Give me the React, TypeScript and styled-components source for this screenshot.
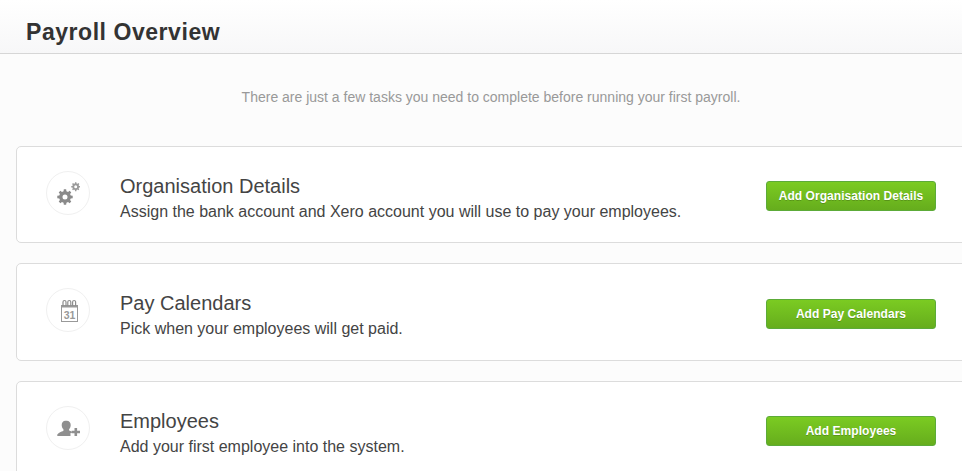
import styled, { createGlobalStyle } from "styled-components";

const GlobalStyle = createGlobalStyle`
  html, body {
    margin: 0;
    padding: 0;
    background: #fcfcfc;
    overflow: hidden;
  }
  body {
    font-family: "Liberation Sans", Arial, sans-serif;
  }
`;

const Page = styled.div`
  width: 962px;
  height: 471px;
  overflow: hidden;
`;

const Header = styled.header`
  height: 54px;
  box-sizing: border-box;
  padding: 18px 0 0 26px;
  border-bottom: 1px solid #d6d6d6;
  background: linear-gradient(#ffffff 0%, #f7f7f8 100%);
`;

const Title = styled.h1`
  margin: 0;
  font-size: 23px;
  line-height: 28px;
  font-weight: 700;
  letter-spacing: 0.55px;
  color: #333333;
`;

const Intro = styled.p`
  margin: 0;
  padding: 35px 0 0 20px;
  height: 56.6px;
  text-align: center;
  font-size: 14px;
  line-height: 16px;
  color: #999999;
`;

const TaskList = styled.div`
  display: flex;
  flex-direction: column;
  gap: 20px;
  padding-left: 16px;
`;

const Card = styled.section`
  width: 960px;
  height: 97.5px;
  box-sizing: border-box;
  display: flex;
  align-items: center;
  padding-left: 29px;
  background: #ffffff;
  border: 1px solid #dcdcdc;
  border-radius: 5px;
`;

const IconCircle = styled.div`
  flex: none;
  width: 44px;
  height: 44px;
  margin-bottom: 3px;
  box-sizing: border-box;
  display: flex;
  align-items: center;
  justify-content: center;
  border: 1px solid #f0f0f0;
  border-radius: 50%;
  background: #ffffff;
`;

const TaskText = styled.div`
  width: 676px;
  flex: none;
  padding: 9px 0 0 30px;
  box-sizing: border-box;
  color: #444444;
`;

const TaskTitle = styled.h2`
  margin: 0;
  font-size: 20px;
  line-height: 24px;
  font-weight: 400;
`;

const TaskDescription = styled.p`
  margin: 2px 0 0;
  font-size: 16px;
  line-height: 24px;
`;

const AddButton = styled.button`
  flex: none;
  width: 170px;
  height: 30px;
  margin-top: 4px;
  padding: 0;
  border: 1px solid #5cab38;
  border-radius: 3px;
  background: linear-gradient(#7bcb22 0%, #66ad1d 100%);
  color: #ffffff;
  font-family: inherit;
  font-size: 12px;
  font-weight: 700;
  letter-spacing: 0.05px;
  text-shadow: 0 1px 0 rgba(0, 0, 0, 0.2);
`;

const gearPath = (cx: number, cy: number, outer: number, inner: number, hole: number, teeth: number) => {
  const points: string[] = [];
  const step = (Math.PI * 2) / teeth;
  for (let i = 0; i < teeth; i++) {
    const a = i * step;
    const w = step * 0.24;
    const corners = [
      [inner, a - w * 1.3],
      [outer, a - w * 0.8],
      [outer, a + w * 0.8],
      [inner, a + w * 1.3],
    ];
    corners.forEach(([r, t]) => {
      points.push(`${(cx + r * Math.cos(t)).toFixed(2)} ${(cy + r * Math.sin(t)).toFixed(2)}`);
    });
  }
  return `M${points.join("L")}Z M${cx + hole} ${cy}A${hole} ${hole} 0 1 0 ${cx - hole} ${cy}A${hole} ${hole} 0 1 0 ${cx + hole} ${cy}Z`;
};

const GearsIcon = () => (
  <svg width="24" height="24" viewBox="0 0 24 24" aria-hidden="true">
    <path fill="#8a8a8a" fillRule="evenodd" d={gearPath(9, 16, 7.8, 5.9, 2.5, 8)} />
    <path fill="#9a9a9a" fillRule="evenodd" d={gearPath(19.7, 5.7, 4.5, 3.4, 1.5, 8)} />
  </svg>
);

const CalendarIcon = () => (
  <svg width="24" height="24" viewBox="0 0 24 24" aria-hidden="true">
    <rect x="5.500" y="8.500" width="16" height="15" fill="#fff" stroke="#999999" />
    <rect x="5" y="7" width="17" height="2.500" fill="#999999" />
    <path
      d="M7 8V4a1.500 1.500 0 0 1 3 0v4M11.800 8V4a1.500 1.500 0 0 1 3 0v4M16.600 8V4a1.500 1.500 0 0 1 3 0v4"
      fill="none"
      stroke="#8e8e8e"
      strokeWidth="1.200"
    />
    <text x="13.500" y="21" textAnchor="middle" fontSize="10.500" fontWeight="700" fontFamily="Liberation Sans" fill="#999999">
      31
    </text>
  </svg>
);

const AddUserIcon = () => (
  <svg width="24" height="24" viewBox="0 0 24 24" aria-hidden="true">
    <path
      fill="#8f8f8f"
      d="M10.700 4.700c2.500 0 4 1.800 4 4.200 0 1.800-.7 3.300-1.600 4.200v1.500c1 .3 1.900.7 2.700 1.100v1.300h-1.300v3H1.300v-1.600c1.500-1.600 3.800-2.700 6.100-3.400v-1.900c-1-.9-1.700-2.400-1.700-4.200 0-2.400 1.500-4.200 3.700-4.200z"
    />
    <path fill="#8f8f8f" d="M18.500 12h2.600v2.700h2.900v2.600h-2.900V20h-2.600v-2.700h-2.900v-2.600h2.900z" />
  </svg>
);

const tasks = [
  {
    title: "Organisation Details",
    description: "Assign the bank account and Xero account you will use to pay your employees.",
    action: "Add Organisation Details",
    icon: <GearsIcon />,
  },
  {
    title: "Pay Calendars",
    description: "Pick when your employees will get paid.",
    action: "Add Pay Calendars",
    icon: <CalendarIcon />,
  },
  {
    title: "Employees",
    description: "Add your first employee into the system.",
    action: "Add Employees",
    icon: <AddUserIcon />,
  },
];

const App = () => (
  <Page>
    <GlobalStyle />
    <Header>
      <Title>Payroll Overview</Title>
    </Header>
    <Intro>There are just a few tasks you need to complete before running your first payroll.</Intro>
    <TaskList>
      {tasks.map((task) => (
        <Card key={task.title}>
          <IconCircle>{task.icon}</IconCircle>
          <TaskText>
            <TaskTitle>{task.title}</TaskTitle>
            <TaskDescription>{task.description}</TaskDescription>
          </TaskText>
          <AddButton>{task.action}</AddButton>
        </Card>
      ))}
    </TaskList>
  </Page>
);

export default App;
